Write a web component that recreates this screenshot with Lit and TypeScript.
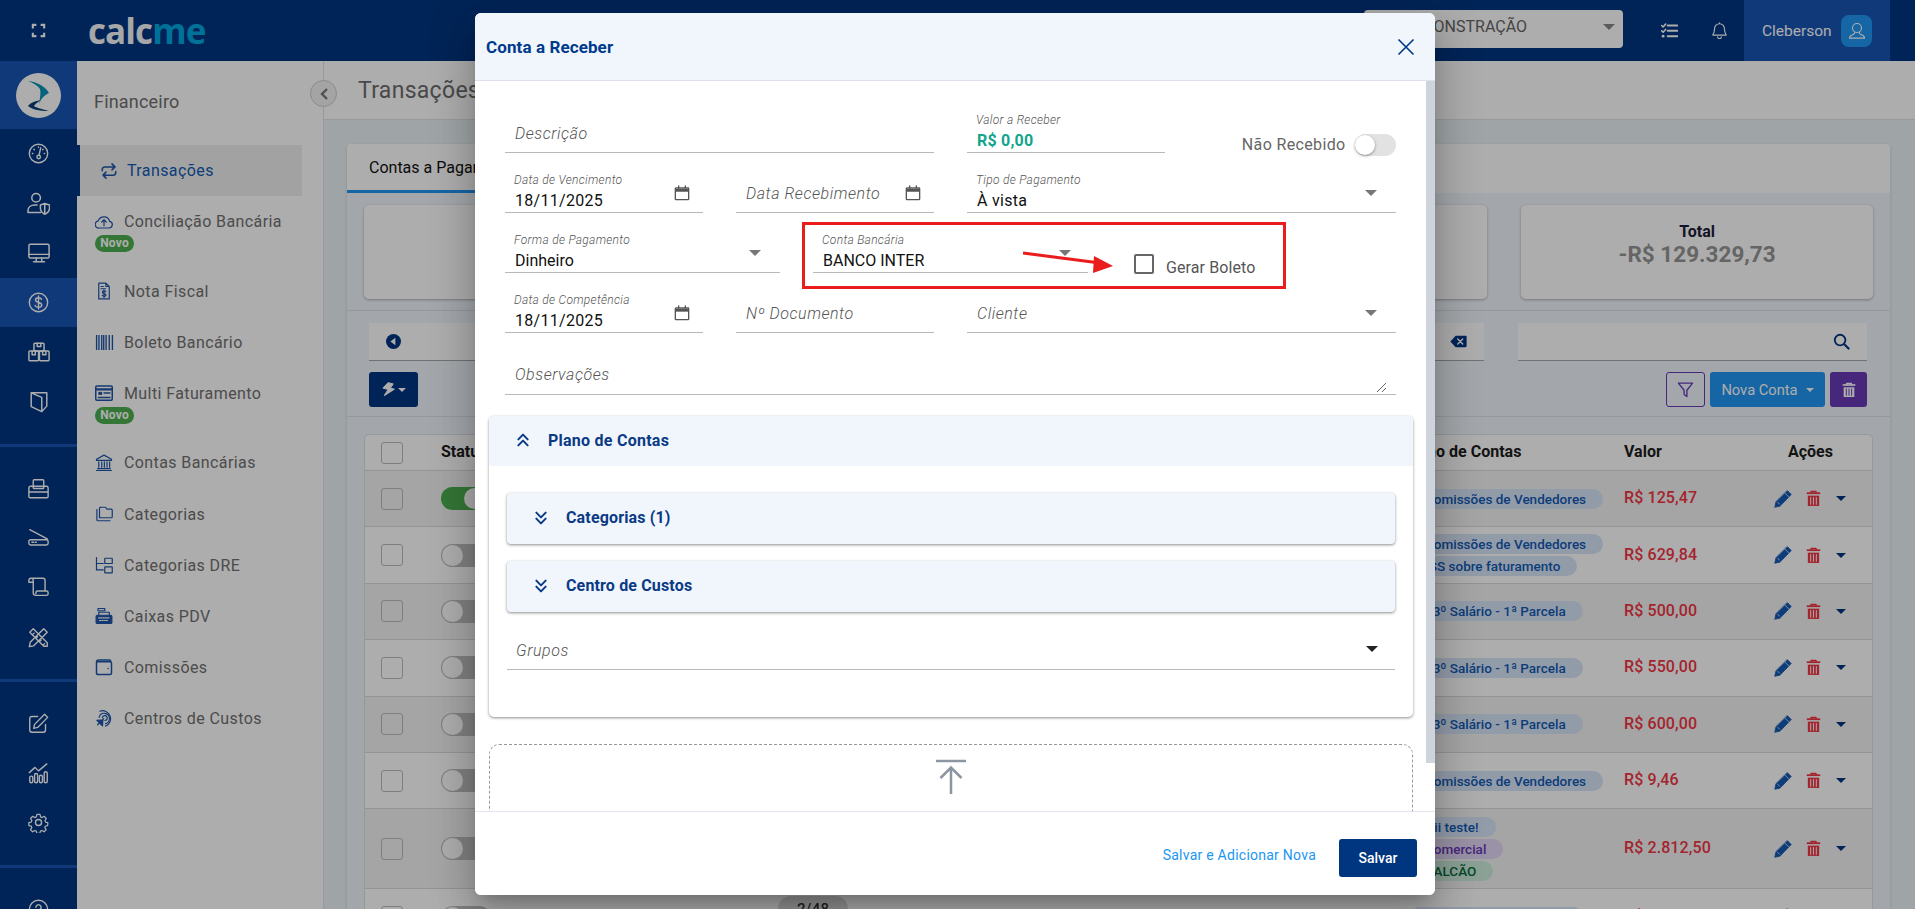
import { LitElement, html, css, svg } from "lit";
import { customElement } from "lit/decorators.js";

const s = (size: number, body: unknown, sw = 1.6) => html`<svg class="ic" width=${size} height=${size} viewBox="0 0 24 24" fill="none" stroke="currentColor" stroke-width=${sw} stroke-linecap="round" stroke-linejoin="round">${body}</svg>`;

const I: Record<string, unknown> = {
  full: svg`<path d="M4 9V4h5M15 4h5v5M20 15v5h-5M9 20H4v-5" stroke-width="3" stroke-linecap="butt" stroke-linejoin="miter"/>`,
  gauge: svg`<circle cx="12" cy="12" r="10.5"/><path d="M14.5 5.5 12.6 14"/><circle cx="12.2" cy="16" r="2"/><path d="M5 12h.6M6.8 7.2l.4.4M12 4.5v.4M18.6 12h.4M17.2 7.2l-.4.4"/>`,
  usershield: svg`<circle cx="9.5" cy="6" r="4.5"/><path d="M1 21v-1.5C1 16 4 13.5 8 13.5h2.5M1 21.5h13"/><path d="M14 13.5l4.5-1.5 5 1.5v3.5c0 3-2.3 5-5 6.2-2.5-1.2-4.5-3.2-4.5-6.2zM18.5 12v11"/>`,
  monitor: svg`<rect x="1" y="2.5" width="22" height="15" rx="1.5"/><path d="M1 13.5h22M9 17.5v4M15 17.5v4M6 21.5h12"/>`,
  dollar: svg`<circle cx="12" cy="12" r="10.5"/><path d="M15.5 8.5c-.6-1.2-1.9-2-3.5-2-2 0-3.5 1.1-3.5 2.7 0 3.7 7.2 2 7.2 5.7 0 1.7-1.7 2.7-3.7 2.7-1.7 0-3.2-.8-3.8-2.2M12 4.5v15"/>`,
  boxes: svg`<rect x="1" y="11" width="10.5" height="10.5" rx="1"/><rect x="12.5" y="11" width="10.5" height="10.5" rx="1"/><rect x="6.5" y="2.5" width="11" height="8.5" rx="1"/><path d="M4.5 11v4h3.5v-4M16 11v4h3.5v-4M10 2.5v3.5h4V2.5"/>`,
  door: svg`<path d="M3.500 2h17v14.500L15 22.500l-11.500-5.500zM3.500 2 15 7v15.500"/>`,
  printer: svg`<rect x="6" y="2" width="12" height="10" rx="1"/><path d="M3 9.5h18a2 2 0 0 1 2 2v9.5a1.5 1.5 0 0 1-1.500 1.500H2.500A1.500 1.500 0 0 1 1 21v-9.500a2 2 0 0 1 2-2zM1 16h22"/>`,
  scanner: svg`<path d="M2 3l20 10.500M3 14.500h18a2 2 0 0 1 2 2v2a2 2 0 0 1-2 2H3a2 2 0 0 1-2-2v-2a2 2 0 0 1 2-2zM4.500 17.500h2M8.500 17.500h1"/>`,
  scroll: svg`<path d="M1 6V4a2.500 2.500 0 0 1 5 0v14a3 3 0 0 0 3 3h12a2 2 0 0 0 2-2v-1a2 2 0 0 0-2-2H11a2 2 0 0 0-2 2v1M3.500 1.500H17a2.500 2.500 0 0 1 2.500 2.500v11.500M1 6h5"/>`,
  tools: svg`<path d="M18 2l4 4L6.500 21.500l-5 1 1-5zM2 6l4-4 16 16v4h-4zM7 7 5 9M11 11l-2 2M15 15l-2 2M19 19l-2 2"/>`,
  edit: svg`<path d="M11 4H4.500A2.500 2.500 0 0 0 2 6.500v13A2.500 2.500 0 0 0 4.500 22h13a2.500 2.500 0 0 0 2.500-2.500V13"/><path d="M19 1.500l3.500 3.500L11 16.500l-4.500 1 1-4.500z"/>`,
  chart: svg`<path d="M1.500 11 8 5l4 4 9.500-8"/><rect x="2" y="15" width="3.500" height="7.500" rx="1.700"/><rect x="7.500" y="12" width="3.500" height="10.500" rx="1.700"/><rect x="13" y="14" width="3.500" height="8.500" rx="1.700"/><rect x="18.500" y="10" width="3.500" height="12.500" rx="1.700"/>`,
  gear: svg`<circle cx="12" cy="12" r="3.500"/><path d="M10 1.500h4l.7 3.200 2 .9 2.800-1.700 2.700 2.900-1.800 2.700.8 2 3 .7v0l-.2 3.800-3 .7-.8 2 1.800 2.700-2.800 2.800-2.700-1.800-2 .8-.7 3h-4l-.7-3-2-.8-2.700 1.800-2.800-2.800 1.700-2.700-.8-2-3.100-.7v-3.800l3.100-.7.800-2-1.700-2.700 2.800-2.900 2.700 1.700 2-.9z" transform="translate(1.500 1.500) scale(.875)"/>`,
  help: svg`<circle cx="12" cy="12" r="10.500"/><path d="M9 9.500a3 3 0 1 1 4.500 2.600c-1 .6-1.500 1.200-1.500 2.400M12 17.500v.200"/>`,
  tasks: svg`<path d="M9.500 5H23M9.500 12.500H23M9.500 20H23" stroke-width="2.800"/><path d="M1 5l2 2 3.500-4M1 12.500l2 2 3.500-4" stroke-width="2.200"/><circle cx="3" cy="20" r="2" fill="currentColor" stroke="none"/>`,
  bell: svg`<path d="M12 2.500a7 7 0 0 1 7 7c0 5 .8 6.500 2.500 9H2.500C4.200 16 5 14.500 5 9.500a7 7 0 0 1 7-7zM9.500 21a2.500 2.500 0 0 0 5 0M12 1v1.500"/>`,
  user: svg`<circle cx="12" cy="8" r="6"/><path d="M9 13.500c.3 2-1 3-3.500 3.800-2.500.8-3.500 2-3.500 4.200h20c0-2.200-1-3.400-3.500-4.200-2.500-.8-3.800-1.800-3.500-3.800"/>`,
  swap: svg`<path d="M3 11.500V10a3.500 3.500 0 0 1 3.500-3.500H20M16 2.500l4 4-4 4M21 12.500V14a3.500 3.500 0 0 1-3.500 3.500H4M8 13.500l-4 4 4 4" stroke-width="2"/>`,
  cloud: svg`<path d="M6 20h12.500a4.500 4.500 0 0 0 1-8.900A8 8 0 0 0 4.300 10.500 4.800 4.800 0 0 0 6 20zM12 17v-7.500M9 12l3-3 3 3"/>`,
  nf: svg`<path d="M5 1.500h9.500l4.500 4.500v16.500H5zM14.500 1.500v4.500H19M8 6h3M8 9h6"/><path d="M14.500 13c-.4-.8-1.300-1.200-2.400-1.200-1.300 0-2.300.7-2.300 1.800 0 2.400 4.800 1.300 4.800 3.700 0 1.100-1.100 1.800-2.500 1.800-1.100 0-2.100-.5-2.500-1.400M12 10.500v10"/>`,
  barcode: svg`<path d="M2 2.500v19M5 2.500v19M8.500 2.500v19M11 2.500v19M14 2.500v19M18 2.500v19M22 2.500v19" stroke-width="1.700" stroke-linecap="butt"/>`,
  multi: svg`<rect x="1" y="2.500" width="22" height="19" rx="1.500" stroke-width="2"/><path d="M1 7h22" stroke-width="3"/><rect x="4.500" y="10.500" width="5" height="4" fill="currentColor" stroke="none"/><path d="M12 12h8M4.500 18h15.500" stroke-width="1.800"/>`,
  bank: svg`<path d="M12 1.500 22 7v1.500H2V7zM2 22h20M3.500 19.500h17M5 10.500v7M9 10.500v7M12.500 10.500v7M16 10.500v7M19.500 10.500v7"/>`,
  folders: svg`<path d="M8 3h6l2 2.500h5.500a1.500 1.500 0 0 1 1.500 1.500v8.500a1.500 1.500 0 0 1-1.500 1.500H6V4.500A1.500 1.500 0 0 1 8 3z"/><path d="M2.500 6v13.500A1.500 1.500 0 0 0 4 21h16"/>`,
  tree: svg`<path d="M2 2v16.500h9M2 10h9"/><rect x="13" y="3" width="10" height="7" rx=".5"/><rect x="13" y="14.500" width="10" height="8" rx=".5"/>`,
  cash: svg`<rect x="1.500" y="11" width="21" height="11" rx="1.500" fill="currentColor"/><path d="M5 11V7h14v4M4 2h9v3H4z"/><path d="M5 14.500h14M6 18h12" stroke="#fff" stroke-dasharray="1.500 1.500"/>`,
  wallet: svg`<path d="M21 5V4.500A2 2 0 0 0 19 2.500H5A3 3 0 0 0 2 5.500v14A2.500 2.500 0 0 0 4.500 22h15.500a2 2 0 0 0 2-2V7a2 2 0 0 0-2-2H3" stroke-width="2"/><circle cx="17.500" cy="14" r="1" fill="currentColor" stroke="none"/>`,
  target: svg`<path d="M6.500 3A10.500 10.500 0 1 1 14 22.800"/><path d="M5.500 11A7 7 0 1 1 14 19.500"/><path d="M9.700 11.500a3.300 3.300 0 1 1 3.500 3.800"/><path d="M11.500 13 3.500 21M2.500 15l8-.500-.5 8z" fill="currentColor"/>`,
  pencil: svg`<path d="M18 1l5 5-15 15.500-7 1.500 1.500-7z" fill="currentColor" stroke-width="1"/><path d="M15 4.500l4.500 4.500M5 16.500l2.500 2.500" stroke="#f3f3f3" stroke-width="1"/>`,
  trash: svg`<path d="M2.500 4.500h19" stroke-width="2.500" stroke-linecap="butt"/><path d="M8.500 4V2h7v2" stroke-width="2"/><path d="M4 8h16v14.500H4z" fill="currentColor" stroke="none"/><path d="M8 10.500v9.500M12 10.500v9.500M16 10.500v9.500" stroke="#f3f3f3" stroke-width="1.500"/>`,
  trashw: svg`<path d="M2.500 4.500h19" stroke-width="2.500" stroke-linecap="butt"/><path d="M8.500 4V2h7v2" stroke-width="2"/><path d="M4 8h16v14.500H4z" fill="currentColor" stroke="none"/><path d="M8 10.500v9.500M12 10.500v9.500M16 10.500v9.500" stroke="#673ab7" stroke-width="1.500"/>`,
  funnel: svg`<path d="M2 3h20l-8 10v9l-4-3v-6z" stroke-width="1.900"/>`,
  search: svg`<circle cx="10" cy="10" r="7.500" stroke-width="2.600"/><path d="M15.500 15.500 22 22" stroke-width="3"/>`,
  bolt: svg`<path d="M9 1.500h8l-3 7.500h7L8 23l3.500-11H3z" fill="currentColor" transform="rotate(15 12 12)"/>`,
  backspace: svg`<path d="M8 4h14a1.500 1.500 0 0 1 1.500 1.500v13A1.500 1.500 0 0 1 22 20H8L.5 12z" fill="currentColor" stroke="none"/><path d="M11 8.500l7 7M18 8.500l-7 7" stroke="#fff" stroke-width="2"/>`,
  back: svg`<circle cx="12" cy="12" r="12" fill="currentColor" stroke="none"/><path d="M15 6v12L7 12z" fill="#fff" stroke="none"/>`,
  close: svg`<path d="M3 3l18 18M21 3 3 21" stroke-width="2" stroke-linecap="butt"/>`,
  cal: svg`<path d="M3 4.500h18a1 1 0 0 1 1 1V21a1 1 0 0 1-1 1H3a1 1 0 0 1-1-1V5.500a1 1 0 0 1 1-1z" stroke-width="2"/><path d="M2 6h20v4H2z" fill="currentColor" stroke="none"/><path d="M7 1.500v3M17 1.500v3" stroke-width="2"/>`,
  up2: svg`<path d="M5 11l7-7 7 7M5 20l7-7 7 7" stroke-width="3"/>`,
  down2: svg`<path d="M5 4l7 7 7-7M5 13l7 7 7-7" stroke-width="3"/>`,
};

interface NavItem { icon: string; label: string; active?: boolean; badge?: boolean; }
const nav: NavItem[] = [
  { icon: "swap", label: "Transações", active: true },
  { icon: "cloud", label: "Conciliação Bancária", badge: true },
  { icon: "nf", label: "Nota Fiscal" },
  { icon: "barcode", label: "Boleto Bancário" },
  { icon: "multi", label: "Multi Faturamento", badge: true },
  { icon: "bank", label: "Contas Bancárias" },
  { icon: "folders", label: "Categorias" },
  { icon: "tree", label: "Categorias DRE" },
  { icon: "cash", label: "Caixas PDV" },
  { icon: "wallet", label: "Comissões" },
  { icon: "target", label: "Centros de Custos" },
];

interface Pill { t: string; c?: string; }
interface Row { on?: boolean; pills: Pill[]; value: string; tall?: boolean; }
const cm = "Comissões de Vendedores";
const sal = "13º Salário - 1ª Parcela";
const rows: Row[] = [
  { on: true, pills: [{ t: cm }], value: "R$ 125,47" },
  { pills: [{ t: cm }, { t: "ISS sobre faturamento" }], value: "R$ 629,84" },
  { pills: [{ t: sal }], value: "R$ 500,00" },
  { pills: [{ t: sal }], value: "R$ 550,00" },
  { pills: [{ t: sal }], value: "R$ 600,00" },
  { pills: [{ t: cm }], value: "R$ 9,46" },
  { pills: [{ t: "Oii teste!" }, { t: "Comercial", c: "purple" }, { t: "BALCÃO", c: "green" }], value: "R$ 2.812,50", tall: true },
  { pills: [{ t: sal }], value: "R$ 700,00" },
];

@customElement("app-root")
export class AppRoot extends LitElement {
  static styles = css`
    :host { display: block; width: 100%; height: 909px; overflow: hidden; position: relative; font-family: Roboto, "Liberation Sans", sans-serif; background: #eaf3f5; color: #212121; }
    * { box-sizing: border-box; }
    svg { display: block; flex: none; }
    .top { height: 61px; background: #003580; display: flex; align-items: center; color: #fff; }
    .top-ic { width: 77px; display: flex; justify-content: center; }
    .logo { margin-left: 11px; font: 700 35px/1 "Open Sans", sans-serif; letter-spacing: -.9px; color: #f4f6f8; }
    .logo span { color: #00a9e0; }
    .select { margin-left: auto; width: 259px; height: 38px; margin-top: -4px; background: #fff; border-radius: 4px; color: #666; font-size: 16px; display: flex; align-items: center; padding: 0 8px 4px 36px; justify-content: space-between; }
    .caret { width: 0; height: 0; border-left: 6px solid transparent; border-right: 6px solid transparent; border-top: 6px solid #888; flex: none; }
    .tasks { margin-left: 38px; }
    .bell { margin-left: 33px; }
    .who { margin-left: 16px; width: 146px; height: 61px; background: #1855b3; display: flex; align-items: center; padding: 0 18px; justify-content: space-between; font-size: 15.5px; color: #fff; }
    .avatar { width: 31px; height: 32px; border-radius: 8px; background: #2196f3; display: flex; align-items: center; justify-content: center; }
    .shell { display: flex; height: 848px; }
    .rail { width: 77px; background: #003580; color: #fff; flex: none; }
    .brand { height: 68px; background: #1855b3; display: flex; align-items: center; justify-content: center; padding-right: 1px; }
    .circle { width: 45px; height: 45px; border-radius: 50%; background: #fff; display: flex; align-items: center; justify-content: center; }
    .rail-i { height: 49.6px; display: flex; align-items: center; justify-content: center; }
    .rail-i.on { background: #1855b3; }
    .rail-sep { height: 3px; background: #1855b3; margin: 17px 0 17px; }
    .panel { width: 247px; flex: none; background: #fff; border-right: 1px solid #dfe3e6; }
    .panel h2 { margin: 0; height: 84px; padding: 30px 0 0 17px; font: 400 18px/22px Roboto, sans-serif; color: #6f6f6f; letter-spacing: .2px; }
    .nav { display: flex; align-items: center; height: 51.1px; padding-left: 17px; color: #707070; font-size: 16px; letter-spacing: .4px; flex-wrap: wrap; align-content: flex-start; padding-top: 16px; }
    .nav .ni { width: 20px; color: #1e55a8; margin-right: 10px; display: flex; justify-content: center; }
    .nav.active { width: 225px; background: #efefef; border-left: 3px solid #003580; color: #135ab3; padding-left: 19px; }
    .nav.active .ni { margin-right: 8px; }
    .nav.badge { height: 69.6px; }
    .novo { flex-basis: 100%; }
    .novo b { display: block; width: 39px; text-align: center; background: #4caf50; color: #fff; font-size: 12px; font-weight: 700; line-height: 17px; border-radius: 9px; margin: 4px 0 0 1px; letter-spacing: .2px; }
    .main { flex: 1; min-width: 0; position: relative; }
    .head { height: 59px; background: #fff; border-bottom: 1px solid #dfe4e6; padding: 16px 0 0 34px; font-size: 23px; letter-spacing: .3px; color: #6c6c6c; position: relative; }
    .collapse { position: absolute; left: -14px; top: 19px; width: 27px; height: 27px; border-radius: 50%; background: #f2f2f2; border: 1px solid #ccc; display: flex; align-items: center; justify-content: center; color: #777; }
    .card { margin: 24px 25px 0 23px; background: #f1f6fd; border-radius: 4px 4px 0 0; box-shadow: 0 1px 3px rgba(0,0,0,.15); }
    .tabs { background: #fff; height: 49px; border-radius: 4px 4px 0 0; }
    .tab { width: 280px; height: 49px; border-bottom: 3px solid #2196f3; padding: 14px 0 0 22px; font-size: 16px; color: #111; }
    .sum { display: grid; grid-template-columns: repeat(4, 1fr); gap: 34px; padding: 12px 17px 11px; border-bottom: 1px solid #dce1e8; }
    .sum > div { height: 94px; background: #fff; border-radius: 5px; box-shadow: 0 1px 3px rgba(0,0,0,.3); text-align: center; padding-top: 18px; }
    .sum b { display: block; font-size: 16px; line-height: 18px; font-weight: 700; color: #1c1c3a; }
    .sum strong { display: block; font-size: 22.5px; line-height: 26px; font-weight: 700; color: #969696; }
    .filters { display: flex; gap: 34px; padding: 12px 23px 0 22px; }
    .fbox { height: 38px; background: #fff; border-bottom: 1px solid #a8a8a8; display: flex; align-items: center; justify-content: space-between; padding: 0 17px; color: #003580; }
    .fbox.a { flex: 1; }
    .fbox.b { width: 349px; }
    .tools { display: flex; align-items: center; padding: 11px 23px 9px 22px; border-bottom: 1px solid #dce1e8; gap: 5px; }
    .btn { height: 35px; border-radius: 3px; display: flex; align-items: center; justify-content: center; color: #fff; font-size: 14.7px; }
    .btn.bolt { width: 49px; background: #003580; gap: 2px; margin-right: auto; }
    .caret.w { border-top-color: #fff; border-left-width: 4px; border-right-width: 4px; border-top-width: 4px; }
    .btn.fl { width: 39px; border: 1px solid #673ab7; color: #673ab7; background: #f1f6fd; }
    .btn.nova { width: 115px; background: #2196f3; gap: 8px; }
    .btn.del { width: 37px; background: #673ab7; }
    .tbl { margin: 17px 17px 0; background: #fff; border: 1px solid #dde0e3; border-bottom: 0; border-radius: 5px 5px 0 0; }
    .tr { display: grid; grid-template-columns: 76px 963px 220px 136px 1fr; align-items: center; min-height: 56.4px; border-bottom: 1px solid #dadada; }
    .tr.th { min-height: 36px; font-weight: 700; font-size: 16px; color: #1c1c1c; padding-bottom: 2px; }
    .tr.th .cb { margin-top: 2px; }
    .tr.odd { background: #f3f3f3; }
    .tr.tall { min-height: 80px; }
    .tr.th .act { padding-left: 28px; }
    .cb { width: 22px; height: 22px; border: 1px solid #bbb; border-radius: 3px; margin-left: 16px; background: transparent; }
    .sw { width: 50px; height: 23px; border-radius: 12px; background: #bdbdbd; position: relative; }
    .sw::after { content: ""; position: absolute; left: 1px; top: 1px; width: 21px; height: 21px; border-radius: 50%; background: #fff; }
    .sw.on { background: #4caf50; }
    .sw.on::after { left: 23px; }
    .pills { display: flex; flex-direction: column; align-items: flex-start; gap: 2px; padding-left: 6px; }
    .pill { height: 20px; line-height: 20px; border-radius: 10px; background: #d8e6fa; color: #135ab3; font-size: 13.5px; font-weight: 500; padding: 0 17px 0 15px; white-space: nowrap; }
    .pill.purple { background: #e4d8f5; color: #673ab7; }
    .pill.green { background: #cdeedd; color: #0a6a3a; }
    .val { color: #f23545; font-size: 16px; font-weight: 500; letter-spacing: .1px; padding-bottom: 2px; }
    .act { display: flex; align-items: center; padding-left: 14px; }
    .act .pen { color: #135ab3; }
    .act .tr2 { color: #f23545; margin-left: 13px; }
    .act .dn { margin-left: 14px; border-top-color: #003580; border-left-width: 5px; border-right-width: 5px; border-top-width: 5px; }
    .pager { position: absolute; left: 454px; top: 835px; width: 70px; height: 26px; border-radius: 13px; background: #dcdcdc; text-align: center; font-size: 15px; font-weight: 500; line-height: 26px; color: #333; letter-spacing: .2px; }

    .scrim { position: absolute; inset: 0; background: rgba(0,0,0,.32); }
    .dialog { position: absolute; left: 475px; top: 13px; width: 960px; height: 882px; background: #fff; border-radius: 6px; display: flex; flex-direction: column; overflow: hidden; box-shadow: 0 11px 15px -7px rgba(0,0,0,.2), 0 24px 38px 3px rgba(0,0,0,.14), 0 9px 46px 8px rgba(0,0,0,.12); }
    .d-head { height: 68px; flex: none; background: #f1f6fd; border-bottom: 1px solid #dde2ea; display: flex; align-items: center; justify-content: space-between; padding: 0 19px 0 11px; color: #003a8c; font-size: 17px; font-weight: 700; letter-spacing: .1px; }
    .d-body { flex: 1; min-height: 0; overflow: hidden; position: relative; padding-top: 12px; }
    .thumb { position: absolute; right: 0; top: 0; width: 9px; height: 682px; background: #ced3dc; }
    .form { display: grid; grid-template-columns: repeat(12, 1fr); column-gap: 33px; margin: 0 39px 0 30px; }
    .f { height: 60px; border-bottom: 1px solid #b8b8b8; display: flex; align-items: flex-end; padding-left: 10px; position: relative; min-width: 0; }
    .f.obs { height: 62px; grid-column: span 12; }
    .s3 { grid-column: span 3; } .s4 { grid-column: span 4; } .s6 { grid-column: span 6; }
    .grow { flex: 1; min-width: 0; }
    .ph { font-size: 16px; line-height: 20px; font-style: italic; font-weight: 300; color: #555; letter-spacing: .55px; padding-bottom: 8px; white-space: nowrap; }
    .obs .ph { padding-bottom: 9px; }
    .lb { font-size: 12px; line-height: 14px; font-style: italic; font-weight: 300; color: #555; letter-spacing: .3px; margin-bottom: 4px; margin-left: -1px; white-space: nowrap; }
    .v { font-size: 16px; line-height: 20px; color: #111; letter-spacing: .3px; padding-bottom: 1px; white-space: nowrap; }
    .tight .v { letter-spacing: 0; }
    .v.money { font-weight: 700; color: #10a58c; letter-spacing: .2px; }
    .f .calic { color: #555; margin: 0 13px 11px 0; }
    .f .caret { margin-bottom: 16px; margin-right: 19px; border-top-color: #777; }
    .bk .caret { margin-right: 17px; }
    .plain { display: flex; align-items: flex-end; justify-content: flex-end; gap: 9.500px; height: 60px; font-size: 16px; color: #666; letter-spacing: .35px; }
    .plain span { line-height: 20px; margin-bottom: -2px; }
    .dsw { width: 41px; height: 22px; border-radius: 11px; background: #e2e2e2; position: relative; margin-bottom: -3px; }
    .dsw::after { content: ""; position: absolute; left: 0; top: 1px; width: 20px; height: 20px; border-radius: 50%; background: #fff; box-shadow: 0 1px 3px rgba(0,0,0,.4); }
    .gerar { display: flex; align-items: flex-end; gap: 12px; height: 60px; padding: 0 0 0 13px; font-size: 16px; color: #555; letter-spacing: .1px; }
    .dcb { width: 20px; height: 20px; border: 2px solid #666; border-radius: 2px; margin-bottom: -1px; }
    .gerar span { line-height: 18px; margin-bottom: -4px; }
    .grip { position: absolute; right: 9px; bottom: 1px; color: #666; }
    .acc { margin: 21px 22px 0 14px; border-radius: 5px; box-shadow: 0 1px 3px rgba(0,0,0,.45); padding-bottom: 47px; background: #fff; }
    .acc-h { height: 50px; background: #f1f6fd; border-radius: 5px 5px 0 0; display: flex; align-items: center; padding: 0 0 2px 26px; gap: 17px; color: #0b3a85; font-size: 16px; font-weight: 700; letter-spacing: .25px; }
    .sub { margin: 27px 18px 0; height: 51px; border-radius: 4px; box-shadow: 0 1px 3px rgba(0,0,0,.45); gap: 17px; letter-spacing: .15px; }
    .sub + .sub { margin-top: 17px; }
    .grupos { margin: 0 18px; height: 58px; border-bottom: 1px solid #b8b8b8; display: flex; align-items: flex-end; justify-content: space-between; padding-left: 9px; }
    .grupos .caret { border-top-color: #222; margin: 0 17px 17px 0; }
    .upload { margin: 27px 22px 0 14px; height: 130px; border: 1px dashed #999; border-radius: 10px; display: flex; justify-content: center; padding-top: 14px; color: #8c96a3; }
    .d-foot { height: 84px; flex: none; border-top: 1px solid #e3e6ee; display: flex; align-items: center; justify-content: flex-end; gap: 23px; padding: 8px 18px 0 0; background: #fff; }
    .link { color: #2196f3; font-size: 14px; margin-bottom: 6px; letter-spacing: .25px; }
    .save { width: 78px; height: 38px; background: #003580; color: #fff; border-radius: 3px; font-size: 14px; font-weight: 500; display: flex; align-items: center; justify-content: center; }
    .mark { position: absolute; left: 327px; top: 141px; width: 484px; height: 67px; border: 3px solid #ea1c1c; pointer-events: none; }
    .arrow { position: absolute; left: 545px; top: 165px; pointer-events: none; }
  `;

  private field(cls: string, label: string, value?: string, tail?: unknown, money = false) {
    return html`<div class="f ${cls}"><div class="grow">
      ${value ? html`<div class="lb">${label}</div><div class="v ${money ? "money" : ""}">${value}</div>` : html`<div class="ph">${label}</div>`}
    </div>${tail ?? ""}</div>`;
  }

  render() {
    const cal = html`<span class="calic">${s(16, I.cal)}</span>`;
    const car = html`<span class="caret"></span>`;
    const rail = (keys: string[]) => keys.map((k) => html`<div class="rail-i">${s(21, I[k])}</div>`);
    return html`
      <div class="top">
        <div class="top-ic">${s(17, I.full)}</div>
        <div class="logo">calc<span>me</span></div>
        <div class="select"><span>DEMONSTRAÇÃO</span><span class="caret"></span></div>
        <div class="tasks">${s(17, I.tasks)}</div>
        <div class="bell">${s(17, I.bell)}</div>
        <div class="who"><span>Cleberson</span><div class="avatar">${s(18, I.user, 1.5)}</div></div>
        <div style="width:25px"></div>
      </div>
      <div class="shell">
        <aside class="rail">
          <div class="brand"><div class="circle">
            <svg width="34" height="34" viewBox="0 0 34 34"><path d="M7 3C16 4 24 8 28 15 24 17 20 20 18 26 19 20 20 15 19 11 16 7 12 5 7 3z" fill="#0a93b8"/><path d="M20 22C14 23 9 25 7 28 10 31 18 33 28 33 20 31 14 29 13 28 14 26 17 24 20 22z" fill="#0d3f7a"/></svg>
          </div></div>
          <div class="rail-i">${s(21, I.gauge)}</div>
          <div class="rail-i">${s(23, I.usershield)}</div>
          <div class="rail-i">${s(22, I.monitor)}</div>
          <div class="rail-i on">${s(21, I.dollar)}</div>
          <div class="rail-i">${s(22, I.boxes)}</div>
          <div class="rail-i">${s(22, I.door)}</div>
          <div class="rail-sep"></div>
          ${rail(["printer", "scanner", "scroll", "tools"])}
          <div class="rail-sep"></div>
          ${rail(["edit", "chart", "gear"])}
          <div class="rail-sep"></div>
          ${rail(["help"])}
        </aside>
        <nav class="panel">
          <h2>Financeiro</h2>
          ${nav.map((n) => html`<div class="nav ${n.active ? "active" : ""} ${n.badge ? "badge" : ""}">
            <span class="ni">${s(n.icon === "barcode" ? 19 : 18, I[n.icon])}</span><span>${n.label}</span>
            ${n.badge ? html`<span class="novo"><b>Novo</b></span>` : ""}
          </div>`)}
        </nav>
        <main class="main">
          <div class="head">Transações<div class="collapse"><svg width="10" height="12" viewBox="0 0 10 12" fill="none" stroke="currentColor" stroke-width="2.400"><path d="M8 1 3 6l5 5"/></svg></div></div>
          <section class="card">
            <div class="tabs"><div class="tab">Contas a Pagar</div></div>
            <div class="sum"><div></div><div></div><div></div><div><b>Total</b><strong>-R$ 129.329,73</strong></div></div>
            <div class="filters">
              <div class="fbox a"><span style="color:#003580">${s(15, I.back)}</span><span>${s(17, I.backspace)}</span></div>
              <div class="fbox b"><span></span>${s(17, I.search)}</div>
            </div>
            <div class="tools">
              <div class="btn bolt">${s(15, I.bolt)}<span class="caret w"></span></div>
              <div class="btn fl">${s(17, I.funnel)}</div>
              <div class="btn nova"><span>Nova Conta</span><span class="caret w"></span></div>
              <div class="btn del">${s(16, I.trashw)}</div>
            </div>
            <div class="tbl">
              <div class="tr th"><div class="cb"></div><div>Status</div><div>Plano de Contas</div><div>Valor</div><div class="act">Ações</div></div>
              ${rows.map((r, i) => html`<div class="tr ${i % 2 === 0 ? "odd" : ""} ${r.tall ? "tall" : ""}">
                <div class="cb"></div>
                <div><div class="sw ${r.on ? "on" : ""}"></div></div>
                <div class="pills">${r.pills.map((p) => html`<span class="pill ${p.c ?? ""}">${p.t}</span>`)}</div>
                <div class="val">${r.value}</div>
                <div class="act"><span class="pen">${s(18, I.pencil)}</span><span class="tr2">${s(17, I.trash)}</span><span class="caret dn"></span></div>
              </div>`)}
            </div>
          </section>
          <div class="pager">2/48</div>
        </main>
      </div>

      <div class="scrim"></div>
      <div class="dialog">
        <div class="d-head"><span>Conta a Receber</span>${s(20, I.close)}</div>
        <div class="d-body">
          <div class="form">
            ${this.field("s6", "Descrição")}
            ${this.field("s3", "Valor a Receber", "R$ 0,00", "", true)}
            <div class="plain s3"><span>Não Recebido</span><div class="dsw"></div></div>
            ${this.field("s3", "Data de Vencimento", "18/11/2025", cal)}
            ${this.field("s3", "Data Recebimento", undefined, cal)}
            ${this.field("s6", "Tipo de Pagamento", "À vista", car)}
            ${this.field("s4 tight", "Forma de Pagamento", "Dinheiro", car)}
            ${this.field("s4 tight bk", "Conta Bancária", "BANCO INTER", car)}
            <div class="gerar s4"><div class="dcb"></div><span>Gerar Boleto</span></div>
            ${this.field("s3", "Data de Competência", "18/11/2025", cal)}
            ${this.field("s3", "Nº Documento")}
            ${this.field("s6", "Cliente", undefined, car)}
            <div class="f obs"><div class="grow"><div class="ph">Observações</div></div>
              <svg class="grip" width="11" height="11" viewBox="0 0 11 11" fill="none" stroke="currentColor" stroke-width="1"><path d="M1 10 10 1M6 10l4-4"/></svg></div>
          </div>
          <section class="acc">
            <div class="acc-h">${s(16, I.up2)}<span>Plano de Contas</span></div>
            <div class="sub acc-h">${s(16, I.down2)}<span>Categorias (1)</span></div>
            <div class="sub acc-h">${s(16, I.down2)}<span>Centro de Custos</span></div>
            <div class="grupos"><div class="ph">Grupos</div><span class="caret"></span></div>
          </section>
          <div class="upload">
            <svg width="32" height="36" viewBox="0 0 32 36" fill="none" stroke="currentColor"><path d="M1 2h30" stroke-width="2.500"/><path d="M16 35V9M5.500 19 16 8.500 26.500 19" stroke-width="2.500"/></svg>
          </div>
          <div class="thumb"></div>
          <div class="mark"></div>
          <svg class="arrow" width="100" height="30" viewBox="0 0 100 30"><path d="M3 7 80 17" stroke="#ea1c1c" stroke-width="3"/><path d="M74 10 93 20 73 27z" fill="#ea1c1c"/></svg>
        </div>
        <div class="d-foot"><span class="link">Salvar e Adicionar Nova</span><div class="save">Salvar</div></div>
      </div>
    `;
  }
}
